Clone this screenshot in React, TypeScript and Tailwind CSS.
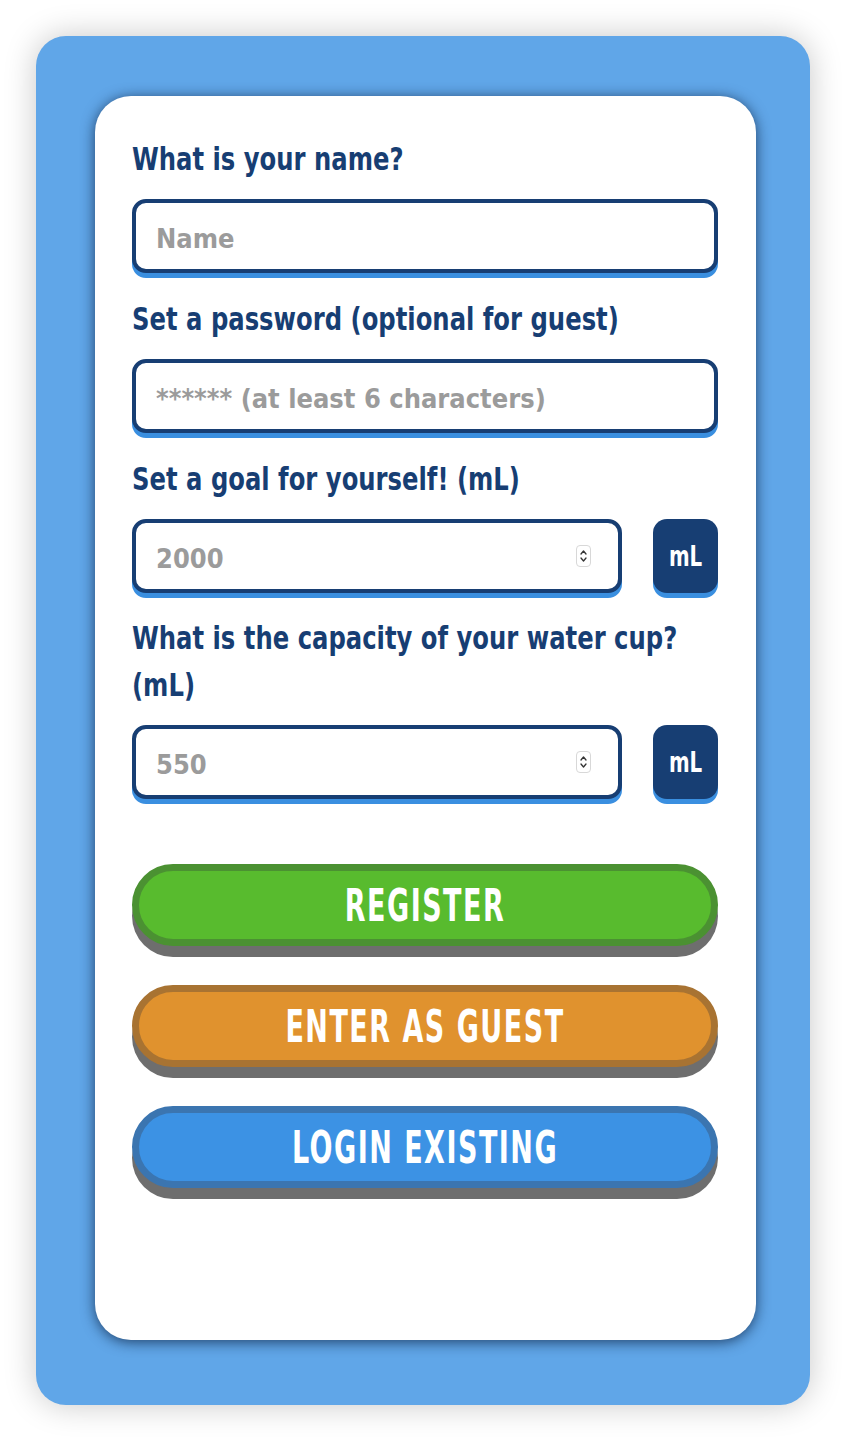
import React from "react";

const font = { fontFamily: '"DejaVu Sans Condensed", "DejaVu Sans", sans-serif' };

function Label({ lines }: { lines: string[] }) {
  return (
    <label className="block text-[27px] leading-[47px] font-bold text-[#173e73]">
      {lines.map((line) => (
        <span key={line} className="block">
          <span className="inline-block scale-y-[1.2]">{line}</span>
        </span>
      ))}
    </label>
  );
}

const fieldCls =
  "w-full h-[74px] rounded-[14px] border-[4px] border-[#173e73] bg-white pl-[20px] pr-12 pt-1 text-[27px] font-bold text-[#173e73] placeholder:text-[#9b9b9b] shadow-[0_5px_0_#3a8fe0] outline-none [appearance:textfield] [&::-webkit-inner-spin-button]:appearance-none [&::-webkit-outer-spin-button]:appearance-none";

function Spinner() {
  return (
    <div className="absolute right-[31px] top-1/2 -translate-y-1/2 w-[15px] h-[22px] rounded-[4px] border border-[#d8d8d8] bg-white flex flex-col items-center justify-center">
      <svg width="9" height="18" viewBox="0 0 9 18" fill="none" stroke="#333" strokeWidth="1.3" strokeLinecap="round" strokeLinejoin="round">
        <path d="M2 7 L4.5 4 L7 7" />
        <path d="M2 11 L4.5 14 L7 11" />
      </svg>
    </div>
  );
}

function NumberRow({ placeholder }: { placeholder: string }) {
  return (
    <div className="flex gap-[31px]">
      <div className="relative flex-1 min-w-0">
        <input type="number" placeholder={placeholder} className={fieldCls} style={font} />
        <Spinner />
      </div>
      <button className="w-[65px] h-[74px] shrink-0 rounded-[14px] bg-[#173e73] text-white text-[22px] font-bold shadow-[0_5px_0_#3a8fe0]">
        <span className="inline-block scale-y-[1.3]">mL</span>
      </button>
    </div>
  );
}

function BigButton({ label, fill, edge }: { label: string; fill: string; edge: string }) {
  return (
    <button
      className={`w-full h-[82px] rounded-full border-[7px] ${fill} ${edge} text-white text-[30px] font-bold tracking-[1.5px] uppercase shadow-[0_11px_0_#6e6e6e]`}
    >
      <span className="inline-block scale-y-[1.5]">{label}</span>
    </button>
  );
}

export default function App() {
  return (
    <div className="min-h-screen bg-white pt-[36px] px-[36px]" style={font}>
      <div className="h-[1369px] rounded-[30px] bg-[#60a6e8] pl-[59px] pr-[54px] pt-[60px] shadow-[0_0_32px_rgba(0,0,0,0.22)]">
        <div className="h-[1244px] rounded-[36px] bg-white pl-[37px] pr-[38px] pt-[39px] shadow-[0_2px_14px_rgba(10,30,60,0.75)]">
          <Label lines={["What is your name?"]} />
          <div className="mt-[17px] mb-[22px]">
            <input type="text" placeholder="Name" className={fieldCls} style={font} />
          </div>

          <Label lines={["Set a password (optional for guest)"]} />
          <div className="mt-[17px] mb-[22px]">
            <input type="password" placeholder="****** (at least 6 characters)" className={fieldCls} style={font} />
          </div>

          <Label lines={["Set a goal for yourself! (mL)"]} />
          <div className="mt-[17px] mb-[21px]">
            <NumberRow placeholder="2000" />
          </div>

          <Label lines={["What is the capacity of your water cup?", "(mL)"]} />
          <div className="mt-[17px]">
            <NumberRow placeholder="550" />
          </div>

          <div className="mt-[65px] flex flex-col gap-[39px]">
            <BigButton label="Register" fill="bg-[#58bb2e]" edge="border-[#4b9132]" />
            <BigButton label="Enter as guest" fill="bg-[#e0922e]" edge="border-[#a87332]" />
            <BigButton label="Login existing" fill="bg-[#3c92e4]" edge="border-[#3b75b0]" />
          </div>
        </div>
      </div>
    </div>
  );
}
